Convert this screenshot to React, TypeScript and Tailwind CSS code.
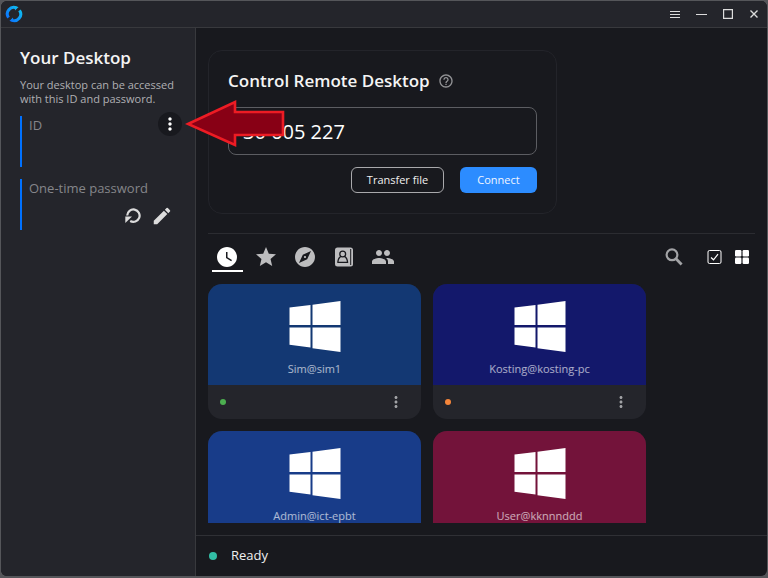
import React, { useState } from 'react';
import {
  MdWatchLater,
  MdStar,
  MdExplore,
  MdPeople,
  MdMoreVert,
  MdEdit,
  MdHelpOutline,
} from 'react-icons/md';

interface Peer {
  name: string;
  color: string;
  dot: string;
}

const peers: Peer[] = [
  { name: 'Sim@sim1', color: 'bg-[#133873]', dot: 'bg-[#4caf50]' },
  { name: 'Kosting@kosting-pc', color: 'bg-[#13186b]', dot: 'bg-[#f5853a]' },
  { name: 'Admin@ict-epbt', color: 'bg-[#183c89]', dot: 'bg-[#f5853a]' },
  { name: 'User@kknnnddd', color: 'bg-[#73133a]', dot: 'bg-[#f5853a]' },
];

const Logo = () => (
  <svg className="h-[18px] w-[18px]" viewBox="0 0 18 18" fill="none" aria-hidden="true">
    <defs>
      <linearGradient id="logo" gradientUnits="userSpaceOnUse" x1="2" y1="15" x2="15" y2="3">
        <stop offset="0" stopColor="#0a6cff" />
        <stop offset="1" stopColor="#10c0ee" />
      </linearGradient>
    </defs>
    <g stroke="url(#logo)" strokeWidth="3">
      <path d="M11.6 3A6.5 6.5 0 0 0 3.5 12.6" />
      <path d="M6.4 15A6.5 6.5 0 0 0 14.5 5.4" />
    </g>
    <path d="M9.5 1.3 13.6 2 10 5.6zM8.5 16.7 4.4 16 8 12.4z" fill="url(#logo)" />
  </svg>
);

const WindowsLogo = () => (
  <svg className="h-[52px] w-[52px]" viewBox="0 0 52 52" fill="#fff" aria-hidden="true">
    <path d="M0.5 7.5 21.5 5v20H0.5zM23.5 4.7 51.5 1v24h-28zM0.5 27.5h21v20l-21-2.7zM23.5 27.5h28V52l-28-3.8z" />
  </svg>
);

const RefreshIcon = () => (
  <svg className="h-4 w-4" viewBox="0 0 16 16" fill="none" aria-hidden="true">
    <path d="M2.2 7.5A6.2 6.2 0 1 1 5.2 13" stroke="currentColor" strokeWidth="2.2" />
    <path d="M0.3 8.6H7L0.3 15z" fill="currentColor" />
  </svg>
);

const SearchIcon = () => (
  <svg className="h-[18px] w-[18px]" viewBox="0 0 18 18" fill="none" stroke="currentColor" aria-hidden="true">
    <circle cx="7" cy="6.8" r="5.4" strokeWidth="2.2" />
    <path d="M11 10.8 16.6 16.4" strokeWidth="2.8" />
  </svg>
);

const AddressBookIcon = () => (
  <svg className="h-5 w-5" viewBox="0 0 20 20" fill="none" aria-hidden="true">
    <rect x="1" y="0.5" width="18" height="19" rx="2.5" fill="currentColor" />
    <path d="M16.7 2v16" stroke="#18191e" />
    <circle cx="8.7" cy="7" r="2.9" stroke="#18191e" strokeWidth="1.3" />
    <path d="M7 9.3c-2 .9-2.9 3-3.2 6.1h9.8c-.3-3.1-1.2-5.2-3.2-6.1" stroke="#18191e" strokeWidth="1.3" strokeLinejoin="round" />
  </svg>
);

const tabs = [
  { label: 'Recent sessions', icon: <MdWatchLater size={24} /> },
  { label: 'Favorites', icon: <MdStar size={24} /> },
  { label: 'Discovered', icon: <MdExplore size={24} /> },
  { label: 'Address book', icon: <AddressBookIcon /> },
  { label: 'Accessible devices', icon: <MdPeople size={24} /> },
];

const TitleBar = () => (
  <header className="flex h-[27px] shrink-0 items-center justify-between border-b border-[#38393d] bg-[#24252b] pl-1 pr-2">
    <Logo />
    <div className="flex items-center gap-4 text-[#dcdcdc]">
      <button aria-label="Menu">
        <svg className="h-2.5 w-2.5" viewBox="0 0 10 10" stroke="currentColor"><path d="M0 2.5h10M0 5.5h10M0 8.5h10" /></svg>
      </button>
      <button aria-label="Minimize">
        <svg className="h-2.5 w-[11px]" viewBox="0 0 11 10" stroke="currentColor"><path d="M0 5.5h11" /></svg>
      </button>
      <button aria-label="Maximize">
        <svg className="h-2.5 w-2.5" viewBox="0 0 10 10" fill="none" stroke="currentColor" strokeWidth="1.2"><path d="M.6.6h8.8v8.8H.6z" /></svg>
      </button>
      <button aria-label="Close">
        <svg className="h-2.5 w-2.5" viewBox="0 0 10 10" stroke="currentColor" strokeWidth="1.4"><path d="M1.5 1.5l7 7M8.5 1.5l-7 7" /></svg>
      </button>
    </div>
  </header>
);

const Sidebar = () => (
  <aside className="flex w-[195px] shrink-0 flex-col border-r border-[#38393d] bg-[#24252b] pl-[19px] pr-3 pt-[18px]">
    <h1 className="text-[17px] font-semibold leading-6 text-[#f4f4f4]">Your Desktop</h1>
    <p className="mt-2 text-[11px] leading-[14px] text-[#b0b0b3]">Your desktop can be accessed with this ID and password.</p>
    <section className="mt-2.5 flex h-[51px] items-start justify-between border-l-2 border-[#0071ff] pl-[7px] pr-px">
      <span className="text-[13px] leading-[18px] text-[#85868a]">ID</span>
      <button aria-label="ID options" className="-mt-1 flex h-6 w-6 items-center justify-center rounded-full bg-[#18191e] text-white">
        <MdMoreVert size={20} />
      </button>
    </section>
    <section className="mt-3 h-[51px] border-l-2 border-[#0071ff] pl-[7px]">
      <div className="text-[13px] leading-[18px] text-[#85868a]">One-time password</div>
      <div className="mt-2 flex items-center justify-end gap-2.5 pr-2.5 text-[#dcdcdc]">
        <button aria-label="Refresh password"><RefreshIcon /></button>
        <button aria-label="Edit password"><MdEdit size={22} /></button>
      </div>
    </section>
  </aside>
);

const PeerCard: React.FC<{ peer: Peer }> = ({ peer }) => (
  <article className="w-[213px] overflow-hidden rounded-[14px] bg-[#24252b]">
    <div className={`flex h-[101px] flex-col items-center pt-4 ${peer.color}`}>
      <WindowsLogo />
      <span className="mt-[9px] text-[11px] leading-4 text-white/65">{peer.name}</span>
    </div>
    <div className="flex h-[34px] items-center justify-between pl-3 pr-4">
      <span className={`h-1.5 w-1.5 rounded-full ${peer.dot}`} />
      <button aria-label={`Options for ${peer.name}`} className="text-[#a2a3a6]"><MdMoreVert size={18} /></button>
    </div>
  </article>
);

const App: React.FC = () => {
  const [remoteId, setRemoteId] = useState('30 605 227');
  const [active, setActive] = useState(0);

  return (
    <div className="relative h-screen bg-[#55565a] px-px pb-0.5 pt-px font-['Open_Sans','Noto_Sans',sans-serif]">
      <div className="flex h-full flex-col overflow-hidden rounded-md bg-[#18191e]">
        <TitleBar />
        <div className="flex min-h-0 flex-1">
          <Sidebar />
          <div className="flex min-w-0 flex-1 flex-col">
            <main className="flex min-h-0 flex-1 flex-col px-3 pb-3 pt-[22px]">
              <section className="w-[349px] rounded-[14px] border border-[#23242a] px-[19px] pb-5 pt-[18px]">
                <div className="flex items-center gap-2 leading-6">
                  <label htmlFor="remote-id" className="text-[17px] font-semibold text-[#f4f4f4]">Control Remote Desktop</label>
                  <MdHelpOutline size={16} className="text-[#929396]" />
                </div>
                <input
                  id="remote-id"
                  value={remoteId}
                  onChange={(e) => setRemoteId(e.target.value)}
                  className="mt-3.5 h-12 w-full rounded-lg border border-[#5c5d62] bg-transparent px-3.5 text-[20px] text-white outline-none"
                />
                <div className="mt-3 flex justify-end gap-4 text-[11px] leading-6">
                  <button className="h-[26px] w-[93px] rounded-md border border-[#a9a9ac] text-[#f0f0f0]">Transfer file</button>
                  <button className="h-[26px] w-[77px] rounded-md bg-[#2c8cff] text-[#f0f6ff]">Connect</button>
                </div>
              </section>
              <nav className="mt-[19px] flex shrink-0 items-center justify-between border-t border-[#2b2c31] pt-2">
                <div className="flex gap-2 pl-1">
                  {tabs.map((tab, i) => (
                    <button
                      key={tab.label}
                      aria-label={tab.label}
                      onClick={() => setActive(i)}
                      className={`flex h-[30px] w-[31px] items-center justify-center border-b-2 pr-px pt-px ${i === active ? 'border-white text-white' : 'border-transparent text-[#bdbdbf]'}`}
                    >
                      {tab.icon}
                    </button>
                  ))}
                </div>
                <div className="flex items-center pr-1.5 text-white">
                  <button aria-label="Search" className="mr-6 text-[#a2a3a6]"><SearchIcon /></button>
                  <button aria-label="Select peers" className="mr-3">
                    <svg className="h-4 w-4" viewBox="0 0 16 16" fill="none" stroke="currentColor">
                      <rect x="1" y="1.5" width="13" height="13" rx="1.5" />
                      <path d="M4 8.5 6.5 10.8l4.5-5.6" strokeWidth="1.2" />
                    </svg>
                  </button>
                  <button aria-label="Grid view">
                    <svg className="h-3.5 w-3.5" viewBox="0 0 14 14" fill="currentColor">
                      <rect width="6.4" height="6.4" rx="1.2" />
                      <rect x="7.6" width="6.4" height="6.4" rx="1.2" />
                      <rect y="7.6" width="6.4" height="6.4" rx="1.2" />
                      <rect x="7.6" y="7.6" width="6.4" height="6.4" rx="1.2" />
                    </svg>
                  </button>
                </div>
              </nav>
              <div className="mt-3 flex min-h-0 flex-1 flex-wrap content-start gap-3 overflow-hidden pr-20">
                {peers.map((peer) => (
                  <PeerCard key={peer.name} peer={peer} />
                ))}
              </div>
            </main>
            <footer className="flex h-[41px] shrink-0 items-center gap-3.5 border-t border-[#2f3035] pl-[13px] text-[13px] text-[#f0f0f0]">
              <span className="h-2 w-2 rounded-full bg-[#32bea6]" />
              Ready
            </footer>
          </div>
        </div>
      </div>
      <svg className="pointer-events-none absolute left-[185px] top-[99px] h-[50px] w-[102px]" viewBox="0 0 102 50" aria-hidden="true">
        <path d="M3 25 50 3v10h48v23H50v10z" fill="#880015" stroke="#ed1c24" strokeWidth="2.6" />
      </svg>
    </div>
  );
};

export default App;
